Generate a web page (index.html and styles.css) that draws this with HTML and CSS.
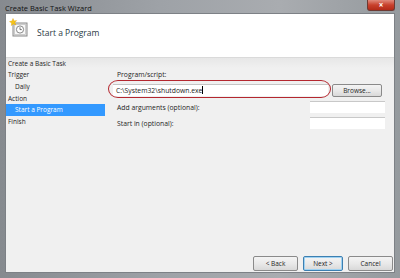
FILE: index.html
```html
<!DOCTYPE html>
<html lang="en">
<head>
    <meta charset="UTF-8">
    <title>Create Basic Task Wizard</title>
    <link rel="stylesheet" href="styles.css">
</head>
<body>
    <div class="window">
        <!-- Title bar -->
        <div class="titlebar">
            <span class="title">Create Basic Task Wizard</span>
            <span class="close-btn">&#215;</span>
        </div>

        <div class="client">
            <!-- Header -->
            <div class="header">
                <svg class="header-icon" width="20" height="20" viewBox="0 0 20 20">
                    <rect x="4" y="5" width="14" height="13" fill="#e9e9e9" stroke="#8a8a8a" stroke-width="1"/>
                    <rect x="5.5" y="6.5" width="11" height="10" fill="#f7f7f7" stroke="#b5b5b5" stroke-width="0.6"/>
                    <circle cx="11" cy="11.5" r="3.6" fill="#fff" stroke="#7a7a7a" stroke-width="0.9"/>
                    <path d="M11 9.3 V11.6 H12.8" fill="none" stroke="#555" stroke-width="0.8"/>
                    <polygon points="4,0.5 5,3 7.6,2.6 5.8,4.6 7,7 4.4,5.9 2.3,7.6 2.7,5 0.5,3.6 3.1,3" fill="#f5c518" stroke="#e0a000" stroke-width="0.4"/>
                </svg>
                <span class="header-title">Start a Program</span>
            </div>

            <div class="body">
                <!-- Left navigation -->
                <div class="nav">
                    <div class="nav-item nav-top">Create a Basic Task</div>
                    <div class="nav-item">Trigger</div>
                    <div class="nav-item sub">Daily</div>
                    <div class="nav-item">Action</div>
                    <div class="nav-item sub selected">Start a Program</div>
                    <div class="nav-item">Finish</div>
                </div>

                <!-- Content -->
                <div class="content">
                    <div class="field-label first">Program/script:</div>
                    <div class="program-row">
                        <div class="program-input">C:\System32\shutdown.exe<span class="caret"></span></div>
                        <div class="circle-mark"></div>
                        <button class="btn browse-btn">Browse...</button>
                    </div>
                    <div class="opt-row">
                        <span class="field-label">Add arguments (optional):</span>
                        <div class="small-input"></div>
                    </div>
                    <div class="opt-row">
                        <span class="field-label">Start in (optional):</span>
                        <div class="small-input"></div>
                    </div>
                </div>
            </div>

            <!-- Footer buttons -->
            <div class="footer">
                <button class="btn nav-btn">&lt; Back</button>
                <button class="btn nav-btn default">Next &gt;</button>
                <button class="btn nav-btn">Cancel</button>
            </div>
        </div>
    </div>
</body>
</html>
```

FILE: styles.css
```css
body {
    margin: 0;
    padding: 0;
    background-color: #9a9ea3;
    font-family: "Open Sans", "Liberation Sans", Arial, sans-serif;
    color: #1e1e1e;
}

.window {
    width: 400px;
    height: 278px;
    display: flex;
    flex-direction: column;
    background: linear-gradient(to right, #868a8f, #9ea2a7 40%, #a9acb0 70%, #959a9e);
    box-sizing: border-box;
    padding: 0 5px 5px 5px;
}

.titlebar {
    height: 13px;
    display: flex;
    align-items: center;
    justify-content: space-between;
}

.title {
    font-size: 7.5px;
    color: #111;
    padding-top: 2px;
}

.close-btn {
    width: 26px;
    height: 10px;
    align-self: flex-start;
    background: linear-gradient(#e08a7c, #c8402c 50%, #b32a18);
    border: 1px solid #6d3a33;
    border-top: none;
    border-radius: 0 0 3px 3px;
    color: #fff;
    font-size: 8px;
    font-weight: bold;
    line-height: 9px;
    text-align: center;
}

.client {
    flex: 1;
    display: flex;
    flex-direction: column;
    background-color: #f0f0f0;
    border: 1px solid #7d8186;
}

.header {
    height: 44px;
    background-color: #ffffff;
    border-bottom: 1px solid #dadada;
    display: flex;
    align-items: flex-start;
    padding: 4px 0 0 3px;
    box-sizing: border-box;
}

.header-icon {
    display: block;
}

.header-title {
    font-size: 8.5px;
    color: #2b3a45;
    margin: 9px 0 0 8px;
}

.body {
    flex: 1;
    display: flex;
    background: linear-gradient(#e7e7e7, #f0f0f0 10px);
}

.nav {
    width: 99px;
    font-size: 6.5px;
}

.nav-item {
    height: 11.8px;
    line-height: 11.8px;
    padding-left: 2px;
}

.nav-top {
    height: 11px;
    line-height: 11px;
}

.nav-item.sub {
    padding-left: 9px;
}

.nav-item.selected {
    background-color: #3399ff;
    color: #ffffff;
}

.content {
    flex: 1;
    padding: 12px 9px 0 8px;
    font-size: 6.8px;
}

.field-label {
    color: #1e1e1e;
    padding-left: 4px;
}

.program-row {
    position: relative;
    display: flex;
    align-items: center;
    margin-top: 4px;
    height: 14px;
}

.program-input {
    width: 215px;
    height: 12px;
    background-color: #ffffff;
    border-top: 1px solid #c5c5c5;
    box-sizing: border-box;
    line-height: 11px;
    padding-left: 3px;
    margin-right: 4px;
    color: #222;
}

.caret {
    display: inline-block;
    width: 1px;
    height: 8px;
    background-color: #000;
    vertical-align: -1px;
}

.circle-mark {
    position: absolute;
    left: -5px;
    top: -3px;
    width: 223px;
    height: 18px;
    border: 1.5px solid #b4272f;
    border-radius: 10px / 9px;
    box-sizing: border-box;
}

.btn {
    font-family: "Open Sans", "Liberation Sans", Arial, sans-serif;
    font-size: 6.5px;
    color: #1e1e1e;
    background: linear-gradient(#f4f4f4, #e9e9e9 50%, #d9d9d9);
    border: 1px solid #8a8a8a;
    border-radius: 2px;
    padding: 0;
    margin: 0;
}

.browse-btn {
    width: 50px;
    height: 13px;
}

.opt-row {
    display: flex;
    justify-content: space-between;
    align-items: center;
    height: 12px;
    margin-top: 4px;
}

.small-input {
    width: 75px;
    height: 11px;
    background-color: #ffffff;
    border-top: 1px solid #c8c8c8;
}

.footer {
    display: flex;
    justify-content: flex-end;
    align-items: flex-end;
    gap: 5px;
    padding: 0 1px 1px 0;
    height: 17px;
}

.nav-btn {
    width: 45px;
    height: 15px;
}

.nav-btn.default {
    width: 40px;
    border-color: #3c7fb1;
    box-shadow: inset 0 0 0 1px #9fd2f2;
}
```
